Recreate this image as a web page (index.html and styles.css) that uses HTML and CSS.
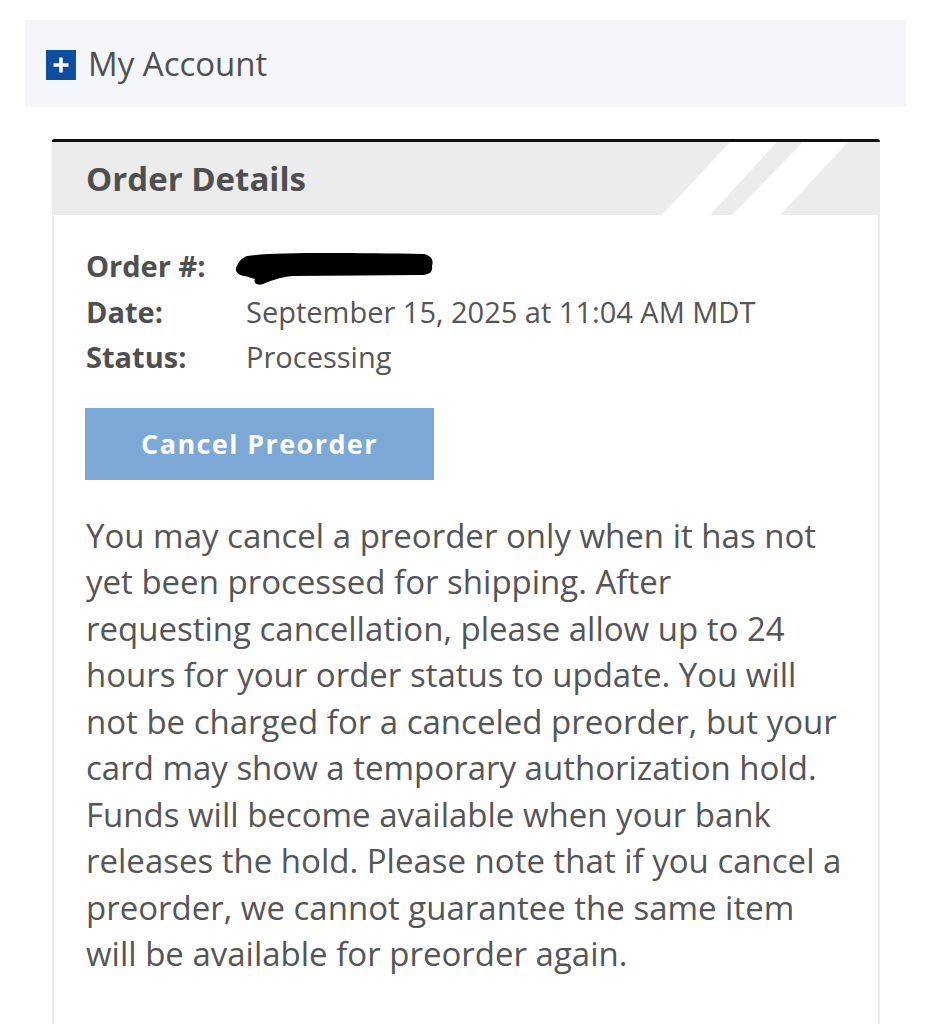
FILE: index.html
```html
<!DOCTYPE html>
<html lang="en">
<head>
<meta charset="utf-8">
<title>Order Details</title>
<link rel="stylesheet" href="styles.css">
</head>
<body>
<div class="account-bar">
  <span class="plus-icon">
    <svg width="30" height="30" viewBox="0 0 30 30"><rect width="30" height="30" fill="#0b4ea2"/><path d="M15 7.5v15M7.5 15h15" stroke="#fff" stroke-width="3.6"/></svg>
  </span>
  <span class="account-label">My Account</span>
</div>

<div class="card">
  <div class="card-header">
    <h2 class="card-title">Order Details</h2>
    <svg class="stripes" width="230" height="73" viewBox="0 0 230 73" preserveAspectRatio="none">
      <polygon points="80,0 127,0 60,73 12,73" fill="#ffffff"/>
      <polygon points="153,0 198,0 130,73 82,73" fill="#ffffff"/>
    </svg>
  </div>
  <div class="card-body">
    <div class="details">
      <div class="label">Order #:</div>
      <div class="value">
        <svg class="redact" width="202" height="40" viewBox="0 0 202 40"><path d="M14 8 C40 4 120 5 190 6 C198 7 201 12 199 18 C200 24 196 27 188 27 L60 28 C45 29 36 34 30 36 C24 38 20 35 22 31 L12 28 C4 27 1 22 4 18 C6 13 9 10 14 8 Z" fill="#000"/></svg>
      </div>
      <div class="label">Date:</div>
      <div class="value">September 15, 2025 at 11:04 AM MDT</div>
      <div class="label">Status:</div>
      <div class="value">Processing</div>
    </div>
    <button class="cancel-btn" type="button">Cancel Preorder</button>
    <p class="note">You may cancel a preorder only when it has not<br>
yet been processed for shipping. After<br>
requesting cancellation, please allow up to 24<br>
hours for your order status to update. You will<br>
not be charged for a canceled preorder, but your<br>
card may show a temporary authorization hold.<br>
Funds will become available when your bank<br>
releases the hold. Please note that if you cancel a<br>
preorder, we cannot guarantee the same item<br>
will be available for preorder again.</p>
  </div>
</div>
</body>
</html>
```

FILE: styles.css
```css
html, body {
  margin: 0;
  padding: 0;
  background: #ffffff;
  font-family: "Open Sans", "Liberation Sans", sans-serif;
  color: #555555;
}

.account-bar {
  margin: 20px 0 0 25px;
  width: 881px;
  height: 87px;
  background: #f4f6f9;
  display: flex;
  align-items: center;
  padding-left: 21px;
  box-sizing: border-box;
}

.plus-icon {
  display: flex;
  width: 30px;
  height: 30px;
  margin-right: 12px;
  margin-top: 2px;
}

.account-label {
  font-size: 33px;
  color: #505050;
  line-height: 1;
}

.card {
  margin: 32px 0 0 52px;
  width: 828px;
  border-top: 3px solid #111111;
  border-radius: 2px 3px 0 0;
}

.card-header {
  position: relative;
  height: 73px;
  background: #ececec;
  display: flex;
  align-items: center;
  padding-left: 34px;
  overflow: hidden;
}

.card-title {
  margin: 0;
  font-size: 33px;
  font-weight: 700;
  color: #4f4f4f;
  position: relative;
  z-index: 1;
}

.stripes {
  position: absolute;
  right: 0;
  top: 0;
}

.card-body {
  border-left: 2px solid #ececec;
  border-right: 2px solid #ececec;
  padding: 28px 10px 60px 32px;
  min-height: 760px;
}

.details {
  display: grid;
  grid-template-columns: 160px auto;
  font-size: 29px;
  line-height: 45.5px;
  color: #555555;
}

.label {
  font-weight: 700;
  color: #4f4f4f;
}

.value {
  display: flex;
  align-items: center;
}

.redact {
  margin-left: -13px;
  margin-top: 4px;
}

.cancel-btn {
  margin-top: 28px;
  width: 349px;
  height: 72px;
  border: none;
  background: #7ca8d5;
  color: #ffffff;
  font-family: "Open Sans", "Liberation Sans", sans-serif;
  font-weight: 700;
  font-size: 27px;
  letter-spacing: 1.4px;
  padding: 0;
  margin-left: -1px;
  display: block;
}

.note {
  margin: 33px 0 0 0;
  font-size: 33px;
  line-height: 46.5px;
  color: #555555;
  white-space: nowrap;
}
```
